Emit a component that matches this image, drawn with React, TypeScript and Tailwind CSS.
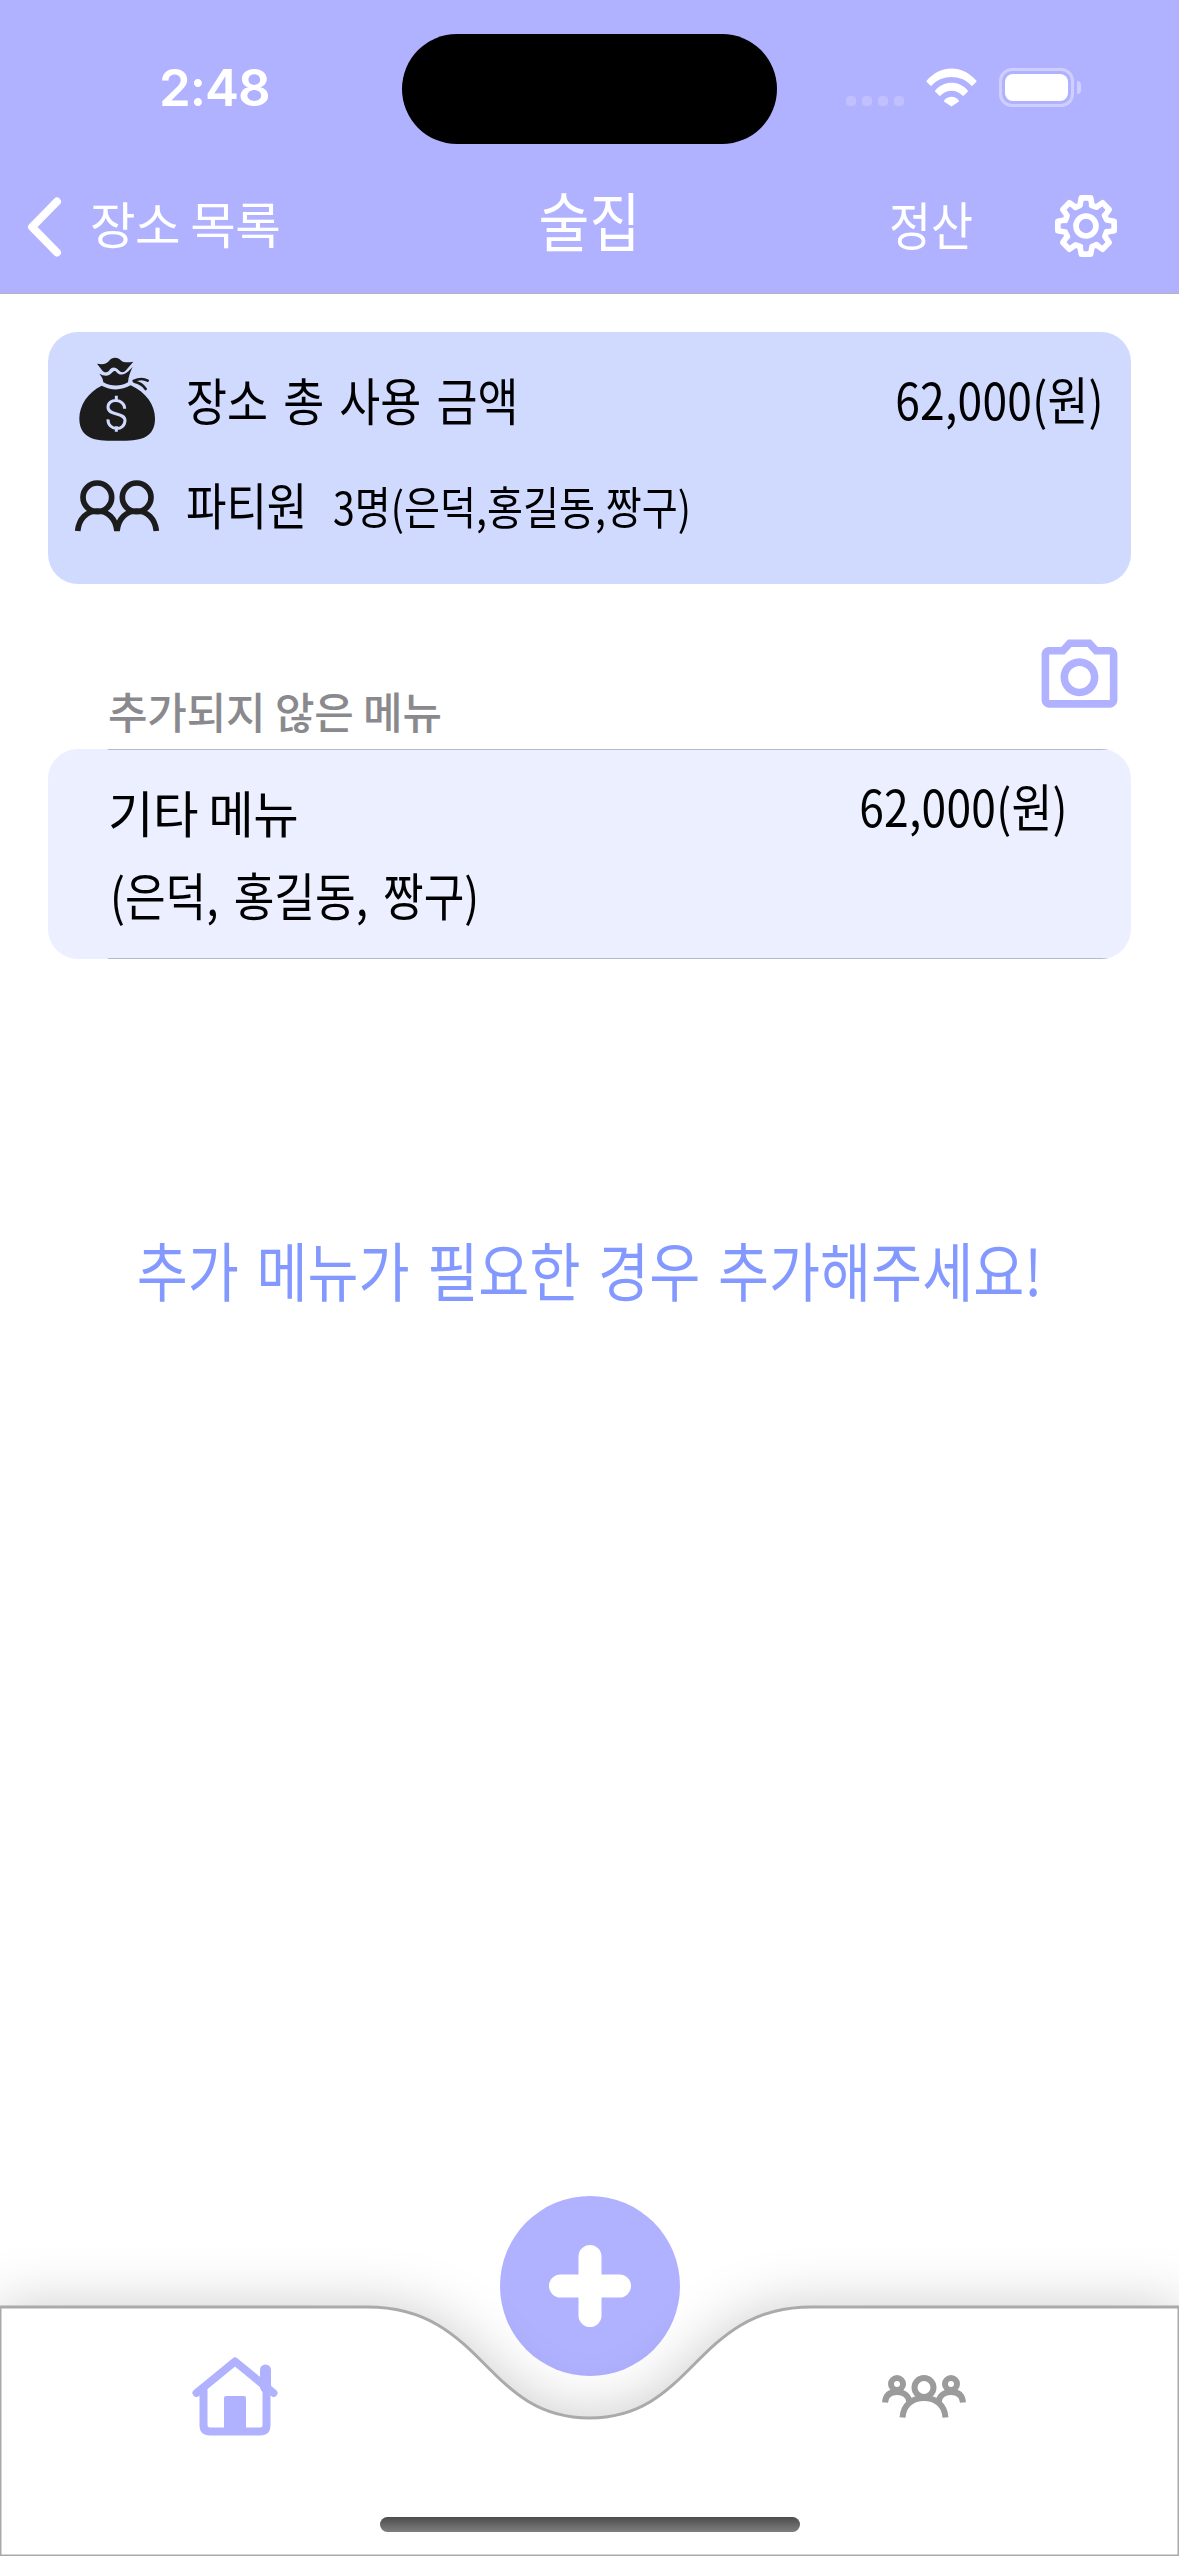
import type { ReactNode } from "react";

const place = {
  title: "술집",
  total: "62,000(원)",
  members: "3명(은덕,홍길동,짱구)",
};

const menus = [{ name: "기타 메뉴", price: "62,000(원)", people: "(은덕, 홍길동, 짱구)" }];

const gearAngles = [0, 45, 90, 135, 180, 225, 270, 315];

// Narrow Hangul label: the glyphs are squeezed from one side, so the box width stays fixed.
function Narrow({ children, className, origin = "origin-left" }: { children: ReactNode; className: string; origin?: string }) {
  return (
    <span className={`inline-block whitespace-nowrap scale-x-[0.87] [word-spacing:6px] ${origin} ${className}`}>
      {children}
    </span>
  );
}

function StatusBar() {
  return (
    <div className="flex h-[160px] items-start">
      <div className="w-[402px] pt-[58px] pl-[159px] font-['Inter'] text-[51px] leading-[60px] font-semibold tracking-[-1px] text-white">
        2:48
      </div>
      <div className="mt-[34px] h-[110px] w-[375px] rounded-full bg-black" />
      <div className="flex pt-[68px] pl-[69px]">
        <div className="mt-[28px] flex gap-[6px]">
          {[0, 1, 2, 3].map((dot) => (
            <span key={dot} className="h-[10px] w-[10px] rounded-[4px] bg-[#c0c0ff]" />
          ))}
        </div>
        <svg className="ml-[22px] h-[39px] w-[51px]" viewBox="0 0 51 39" fill="#fff">
          <path d="M0.8 12.6C14-3.7 37-3.7 50.2 12.6c.5.6.5 1 0 1.500L46.700 17.500c-.6.5-1 .5-1.500 0C35 6.200 16 6.200 5.800 17.500c-.5.5-.9.5-1.500 0L.8 14.100c-.5-.5-.5-.9 0-1.500Z" />
          <path d="M9.300 22.400c8.500-10.200 23.900-10.200 32.400 0 .4.500.4.900 0 1.400L37.900 27.500c-.5.500-1 .5-1.500 0-5.900-6.300-15.900-6.300-21.800 0-.5.500-1 .5-1.500 0L9.300 23.800c-.5-.5-.5-.9 0-1.400Z" />
          <path d="M18.200 32.400c3.500-4.800 11.100-4.800 14.600 0 .3.500.3.900-.1 1.300L26.300 38.100c-.5.500-1.100.5-1.600 0l-6.400-4.400c-.4-.4-.4-.8-.1-1.300Z" />
        </svg>
        <div className="ml-[22px] flex items-center">
          <div className="h-[39px] w-[75px] rounded-[13px] border-[3px] border-[#cfcfff] p-[3px]">
            <div className="h-full w-full rounded-[8px] bg-white" />
          </div>
          <div className="ml-[3px] h-[13px] w-[4px] rounded-r-full bg-[#cfcfff]" />
        </div>
      </div>
    </div>
  );
}

function NavBar() {
  return (
    <div className="grid h-[134px] grid-cols-[402px_375px_402px] items-center text-white">
      <div className="flex items-center pl-[25px]">
        <svg className="h-[68px] w-[38px]" viewBox="0 0 38 68" fill="none" stroke="#fff" strokeWidth="8" strokeLinecap="round" strokeLinejoin="round">
          <path d="M32 8.500 7 34l25 25.500" />
        </svg>
        <span className="mb-[8px] ml-[27px] text-[49.5px] leading-[60px] tracking-[-0.6px] whitespace-nowrap">장소 목록</span>
      </div>
      <div className="mb-[19px] flex justify-center">
        <Narrow className="text-[63.5px] leading-[80px]" origin="origin-center">
          {place.title}
        </Narrow>
      </div>
      <div className="mb-[2px] flex items-center pl-[112px]">
        <div className="mb-[6px] w-[164px]">
          <Narrow className="text-[52.5px] leading-[64px]">정산</Narrow>
        </div>
        <svg className="h-[66px] w-[66px]" viewBox="-99 -99 198 198" fill="none" stroke="#fff" strokeWidth="17" strokeLinecap="round" strokeLinejoin="round">
          {gearAngles.map((angle) => (
            <path key={angle} d="M-32-56-18-62-14-84.500H14L18-62" transform={`rotate(${angle})`} />
          ))}
          <circle r="30" />
        </svg>
      </div>
    </div>
  );
}

function MoneyBagIcon() {
  return (
    <svg className="h-[88px] w-[80px]" viewBox="20 15 240 264" fill="none">
      <g fill="#1c1c1c">
        <path d="M80 41c17 3 26 2 36-8 9-13 27-13 37-1 7 6 20 6 36 3L167 61c-7 8-15 7-22 0-10-12-21-11-29 1-7 7-14 6-19 1Z" />
        <path d="M87 71c16 9 30 8 40-5 5-5 9-4 13 2 13 12 29 4 47-18-6 14-13 29-14 47-23 13-50 13-74 0-1-9-4-17-12-26Z" />
        <path d="M94 107c28 15 59 15 87-1 47 21 73 61 73 99 0 47-27 67-86 67h-57c-57 0-84-22-84-67 0-38 25-78 67-98Z" />
      </g>
      <g stroke="#1c1c1c" strokeWidth="8" strokeLinecap="round">
        <path d="M190 93c14-7 28-9 42-1M192 95c14 3 26 10 34 22" />
      </g>
      <g stroke="#d0daff" strokeWidth="9">
        <path d="M163 176c0-30-50-34-50-4 0 26 51 14 51 39 0 34-52 32-51-3M138 137v16M138 229v16" />
      </g>
    </svg>
  );
}

function PeopleIcon() {
  return (
    <svg className="h-[54px] w-[86px]" viewBox="12 388 258 162" fill="none" stroke="#1c1c1c" strokeWidth="17">
      <circle cx="82" cy="443" r="43" />
      <circle cx="200" cy="443" r="43" />
      <path d="M23 544c4-38 28-60 59-60s55 22 59 60c4-38 28-60 59-60s55 22 59 60" />
    </svg>
  );
}

function SummaryCard() {
  return (
    <section className="mx-[48px] mt-[38px] h-[252px] rounded-[30px] bg-[#d0daff]">
      <div className="flex items-start pt-[23px] pl-[29px]">
        <MoneyBagIcon />
        <div className="mt-[12px] ml-[29px] flex-1">
          <Narrow className="text-[51.2px] leading-[64px]">장소 총 사용 금액</Narrow>
        </div>
        <div className="mt-[11px] mr-[27px] flex justify-end">
          <Narrow className="text-[51px] leading-[64px] tracking-[0.3px]" origin="origin-right">
            {place.total}
          </Narrow>
        </div>
      </div>
      <div className="flex items-start pl-[26px]">
        <div className="mt-[36px]">
          <PeopleIcon />
        </div>
        <div className="mt-[28px] ml-[26px] w-[147px]">
          <Narrow className="text-[50.5px] leading-[64px]">파티원</Narrow>
        </div>
        <div className="mt-[31px]">
          <Narrow className="text-[45px] leading-[64px]">{place.members}</Narrow>
        </div>
      </div>
    </section>
  );
}

function MenuList() {
  return (
    <section className="mx-[48px]">
      <div className="flex h-[165px] items-start justify-between">
        <h2 className="mt-[94px] ml-[60px] text-[43px] leading-[64px] font-medium tracking-[-0.2px] text-[#8a8a8e]">추가되지 않은 메뉴</h2>
        <svg className="mt-[44px] mr-[6px] h-[91px] w-[91px]" viewBox="0 0 24 24" fill="#b0b1ff">
          <path d="M20 5h-3.170L15 3H9L7.170 5H4c-1.100 0-2 .9-2 2v12c0 1.100.9 2 2 2h16c1.100 0 2-.9 2-2V7c0-1.100-.9-2-2-2zm0 14H4V7h4.050l1.830-2h4.240l1.830 2H20v12zM12 8c-2.760 0-5 2.240-5 5s2.240 5 5 5 5-2.240 5-5-2.240-5-5-5zm0 8c-1.650 0-3-1.350-3-3s1.350-3 3-3 3 1.350 3 3-1.350 3-3 3z" />
        </svg>
      </div>
      {menus.map((menu) => (
        <div key={menu.name} className="flex h-[210px] flex-col justify-between overflow-hidden rounded-[30px] bg-[#ecefff]">
          <div className="ml-[60px] h-px bg-[#b5bac8]" />
          <div className="flex h-[208px] justify-between pr-[63px] pl-[60px]">
            <div className="pt-[30px]">
              <p className="text-[49.5px] leading-[64px] tracking-[-0.6px]">{menu.name}</p>
              <p className="mt-[18px] pl-[2px]">
                <Narrow className="text-[50.8px] leading-[64px]">{menu.people}</Narrow>
              </p>
            </div>
            <div className="pt-[23px]">
              <Narrow className="text-[51px] leading-[64px] tracking-[0.3px]" origin="origin-right">
                {menu.price}
              </Narrow>
            </div>
          </div>
          <div className="ml-[60px] h-px bg-[#b5bac8]" />
        </div>
      ))}
    </section>
  );
}

function TabBar() {
  return (
    <footer className="relative mt-auto h-[360px]">
      <button className="absolute top-0 left-[500px] flex h-[180px] w-[180px] items-center justify-center rounded-full bg-[#b0b1ff]">
        <svg className="h-[82px] w-[82px]" viewBox="0 0 82 82" stroke="#fff" strokeWidth="23" strokeLinecap="round">
          <path d="M41 11.500v59M11.500 41h59" />
        </svg>
      </button>
      <svg className="absolute inset-x-0 bottom-0 h-[249px] w-[1179px] overflow-visible drop-shadow-[0_0_28px_rgba(0,0,0,0.2)]" viewBox="0 0 1179 249">
        <path d="M0 0H367.500C484.500 0 484.500 111 589.500 111S694.500 0 811.500 0H1179V249H0Z" fill="#fff" stroke="#aaa" strokeWidth="3" />
      </svg>
      <div className="relative flex h-full flex-col items-center">
        <div className="flex w-full justify-between pt-[157px] pr-[211px] pl-[190px]">
          <svg className="h-[84px] w-[90px]" viewBox="0 0 90 84" fill="none" stroke="#b0b1ff" strokeWidth="8" strokeLinecap="round" strokeLinejoin="round">
            <path d="M6.500 40 45 8.500 83.500 40" />
            <path d="M13.500 37v35q0 6.500 6.500 6.500h50q6.500 0 6.500-6.500V37" />
            <path d="M75.500 17v17" strokeWidth="11" />
            <path d="M34 45q0-2 2-2h18q2 0 2 2v34H34Z" fill="#b0b1ff" stroke="none" />
          </svg>
          <svg className="mt-[20px] h-[48px] w-[88px]" viewBox="0 0 88 48" fill="none" stroke="#9b9b9b" strokeWidth="6">
            <circle cx="44" cy="14.500" r="9.500" />
            <circle cx="17" cy="11" r="6" />
            <circle cx="71" cy="11" r="6" />
            <path d="M22.500 44.500C23.500 32 32 25 44 25s20.500 7 21.500 19.500" />
            <path d="M5 29.500C5.500 22 10 19 17 19s12 4 12.500 10.500M83 29.500C82.500 22 78 19 71 19s-12 4-12.500 10.500" />
          </svg>
        </div>
        <div className="mt-auto mb-[24px] h-[15px] w-[420px] rounded-full bg-gradient-to-b from-[#4b4d4b] to-[#7f7f7f]" />
      </div>
    </footer>
  );
}

export default function App() {
  return (
    <div className="flex h-[2556px] w-[1179px] flex-col overflow-hidden bg-white font-['Noto_Sans_CJK_KR',sans-serif] text-black">
      <header className="h-[294px] border-b border-[#b3b3b3] bg-[#b0b1ff]">
        <StatusBar />
        <NavBar />
      </header>
      <SummaryCard />
      <MenuList />
      <div className="mt-[265px] flex justify-center">
        <Narrow className="text-[63.8px] leading-[88px] text-[#8399ff]" origin="origin-center">
          추가 메뉴가 필요한 경우 추가해주세요!
        </Narrow>
      </div>
      <TabBar />
    </div>
  );
}
